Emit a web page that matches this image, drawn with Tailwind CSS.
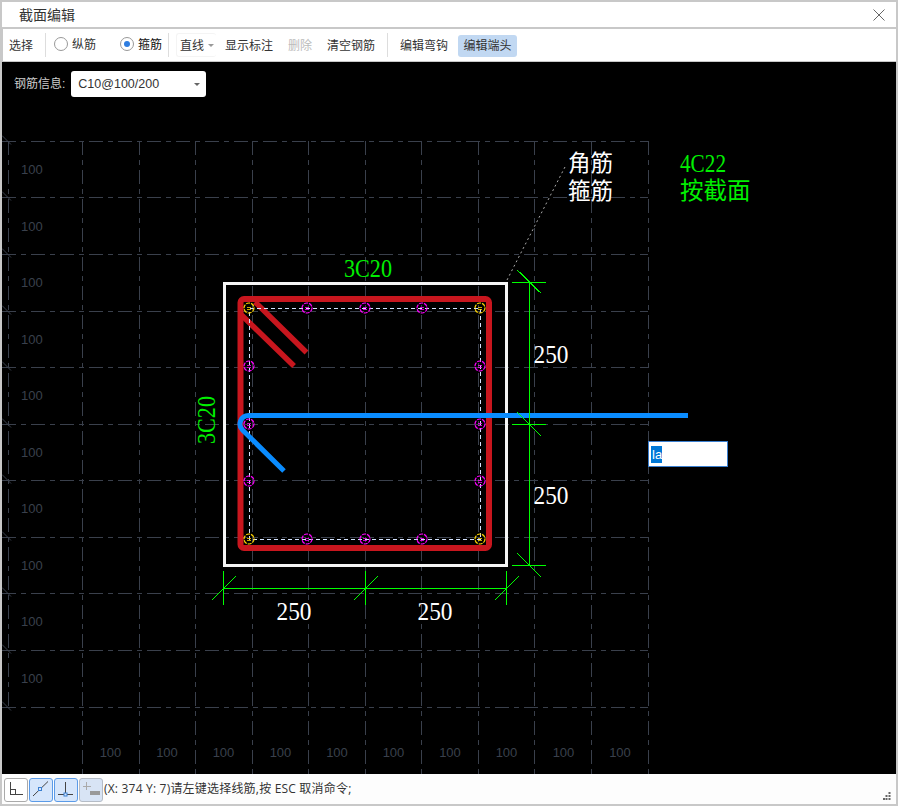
<!DOCTYPE html>
<html lang="en">
<head>
    <meta charset="UTF-8">
    <script src="https://cdn.jsdelivr.net/npm/@tailwindcss/browser@4"></script>
    <title>截面编辑</title>
</head>
<body class="bg-[#c8c8c8] overflow-hidden">
    <div class="w-[898px] h-[806px] flex flex-col pt-[2px] pb-[2px] px-[2px] text-[12px] text-[#333] font-['Liberation_Sans','Noto_Sans_CJK_SC',sans-serif]">
        <!-- title -->
        <div class="h-[25px] shrink-0 bg-white flex items-center justify-between pl-[17px] pr-[10px] pt-px">
            <span class="text-[14px]">截面编辑</span>
            <svg width="14" height="14" viewBox="0 0 14 14" fill="none" stroke="#666" stroke-width="1"><path d="M1.500 1.500 12.500 12.500M12.500 1.500 1.500 12.500"/></svg>
        </div>
        <!-- toolbar -->
        <div class="h-[32px] shrink-0 mt-[2px] ml-[1px] bg-white flex items-center">
            <span class="ml-[6px] w-[24px] mt-[2px]">选择</span>
            <div class="ml-[12px] w-px h-[24px] bg-[#ddd]"></div>
            <div class="ml-[8px] mb-[3px] w-[14px] h-[14px] rounded-full border border-[#999]"></div>
            <span class="ml-[4px] mb-px">纵筋</span>
            <div class="ml-[24px] mb-[3px] w-[14px] h-[14px] rounded-full border border-[#999] flex items-center justify-center">
                <div class="w-[6px] h-[6px] rounded-full bg-[#2e7de0]"></div>
            </div>
            <span class="ml-[4px] mb-px text-[#111]">箍筋</span>
            <div class="ml-[6px] w-px h-[24px] bg-[#ddd]"></div>
            <div class="ml-[7px] w-[40px] h-[24px] flex items-center pl-[3px] rounded-[3px] border border-[#f4f4f4] border-r-0">
                <span class="mt-[2px]">直线</span>
                <div class="ml-[4px] w-0 h-0 border-x-[3px] border-x-transparent border-t-[3px] border-t-[#999]"></div>
            </div>
            <span class="ml-[9px] mt-[2px]">显示标注</span>
            <span class="ml-[15px] mt-[2px] text-[#bbb]">删除</span>
            <span class="ml-[15px] mt-[2px]">清空钢筋</span>
            <div class="ml-[12px] w-px h-[24px] bg-[#ddd]"></div>
            <span class="ml-[12px] mt-[2px]">编辑弯钩</span>
            <div class="ml-[10px] mt-[2px] h-[22px] w-[59px] bg-[#c1d8f2] rounded-[3px] flex items-center justify-center">编辑端头</div>
        </div>
        <!-- canvas -->
        <div class="relative h-[712px] shrink-0 mt-[1px] bg-black overflow-hidden">
            <svg id="drawing" class="absolute inset-0" width="894" height="712" viewBox="2 62 894 712" fill="none">
                <g id="grid" stroke="#3a404c" stroke-dasharray="14 5 5 5" shape-rendering="crispEdges"></g>
                <g id="gridLabels" fill="#3a404c" font-size="13" font-family="Liberation Sans, sans-serif"></g>
                <!-- concrete outline -->
                <rect x="224" y="283" width="282.500" height="282" stroke="#f5f5f5" stroke-width="3" shape-rendering="crispEdges"/>
                <line x1="507" y1="280" x2="566" y2="165" stroke="#aaa" stroke-dasharray="2 3"/>
                <!-- stirrup -->
                <rect x="240.500" y="299" width="248.500" height="249" rx="3.500" stroke="#c8161e" stroke-width="6"/>
                <path d="M255 302 306.500 352.500M241.500 315 294 366" stroke="#c8161e" stroke-width="5.500"/>
                <rect x="249.500" y="308.500" width="231" height="231" stroke="#d6e4ff" stroke-dasharray="4 3" shape-rendering="crispEdges"/>
                <g id="bars" fill="none"></g>
                <!-- active line -->
                <path d="M688 415.500H248.500A8.500 8.500 0 0 0 242.500 430L284 471" stroke="#0a8cff" stroke-width="5"/>
                <!-- dimensions -->
                <g stroke="#00ff00" stroke-width="1.300" shape-rendering="crispEdges">
                    <path d="M512 282.500H546M512 424.500H546M512 565.500H546M529.500 282V566"/>
                    <path d="M223.500 588.500H506.500M223.500 571V605M365.500 571V605M506.500 571V605"/>
                    <path d="M517 270 541 293M517 412 541 436M517 553 541 577M212 600 236 576M354 600 378 576M495 600 519 576"/>
                </g>
                <g font-family="Liberation Serif, Noto Sans CJK SC, serif" font-size="26">
                    <g fill="#ffffff">
                        <text x="533.500" y="363" textLength="35" lengthAdjust="spacingAndGlyphs">250</text>
                        <text x="533.500" y="504" textLength="35" lengthAdjust="spacingAndGlyphs">250</text>
                        <text x="276.500" y="620" textLength="35" lengthAdjust="spacingAndGlyphs">250</text>
                        <text x="417.500" y="620" textLength="35" lengthAdjust="spacingAndGlyphs">250</text>
                        <text x="568" y="171" font-size="22.500">角筋</text>
                        <text x="568" y="199" font-size="22.500">箍筋</text>
                    </g>
                    <g fill="#00f000">
                        <text x="344" y="277" textLength="48" lengthAdjust="spacingAndGlyphs">3C20</text>
                        <text transform="translate(215 444) rotate(-90)" textLength="48" lengthAdjust="spacingAndGlyphs">3C20</text>
                        <text x="680" y="172" textLength="46" lengthAdjust="spacingAndGlyphs">4C22</text>
                        <text x="680" y="199" font-size="23.500">按截面</text>
                    </g>
                </g>
            </svg>
            <!-- rebar info -->
            <div class="absolute left-[12px] top-[9px] flex items-center gap-[6px]">
                <span class="text-[#ccc]">钢筋信息:</span>
                <div class="w-[135px] h-[26px] bg-white rounded-[3px] flex items-center justify-between pl-[7px] pr-[6px] text-[12.5px]">
                    <span>C10@100/200</span>
                    <div class="w-0 h-0 border-x-[3px] border-x-transparent border-t-[3px] border-t-[#666]"></div>
                </div>
            </div>
            <!-- length input -->
            <div class="absolute left-[646px] top-[379px] w-[80px] h-[26px] bg-white border border-[#3a7fd0] flex items-center pl-[2px] text-[13px]">
                <span class="bg-[#0078d7] text-white h-[17px] w-[11px] leading-[17px] px-px">la</span>
            </div>
        </div>
        <!-- status bar -->
        <div class="relative h-[30px] shrink-0 bg-[#fdfdfd] flex items-center pl-[2px] gap-px">
            <div class="mt-[2px] w-[24px] h-[24px] bg-white border border-[#aaa] rounded-[3px]">
                <svg width="22" height="22" viewBox="0 0 22 22" fill="none" stroke="#444"><path d="M5.500 3V15.500H17.500M5.500 10.500H10.500V15.500" shape-rendering="crispEdges"/></svg>
            </div>
            <div class="mt-[2px] w-[24px] h-[24px] bg-[#d6e6fb] border border-[#5b9be8] rounded-[3px]">
                <svg width="22" height="22" viewBox="0 0 22 22" fill="none" stroke="#444"><path d="M3 17 18 2.500"/><rect x="8.500" y="8.500" width="3" height="3" stroke="#3a7fd0" fill="#d6e6fb"/></svg>
            </div>
            <div class="mt-[2px] w-[24px] h-[24px] bg-[#d6e6fb] border border-[#5b9be8] rounded-[3px]">
                <svg width="22" height="22" viewBox="0 0 22 22" fill="none" stroke="#444"><path d="M3 15.500H18M10.500 3V15.500" shape-rendering="crispEdges"/><rect x="9" y="14" width="3" height="3" stroke="#3a7fd0" fill="#d6e6fb"/></svg>
            </div>
            <div class="mt-[2px] w-[24px] h-[24px] bg-[#d8e4f5] border border-[#b5bcc6] rounded-[3px]">
                <svg width="22" height="22" viewBox="0 0 22 22" fill="none"><path d="M6.500 3V11M2.500 7.500H10.500" stroke="#aaa" shape-rendering="crispEdges"/><rect x="10" y="12" width="10" height="4" fill="#999"/></svg>
            </div>
            <span class="tracking-[0.2px] font-['Open_Sans','Noto_Sans_CJK_SC',sans-serif]">(X: 374 Y: 7)请左键选择线筋,按 ESC 取消命令;</span>
            <svg class="absolute right-[5px] bottom-[4px]" width="8" height="8" viewBox="0 0 8 8" fill="#666"><path d="M5.500 0h2v2h-2zM5.500 3h2v2h-2zM5.500 6h2v2h-2zM2.500 3h2v2h-2zM2.500 6h2v2h-2zM0 6h2v2H0z"/></svg>
        </div>
    </div>
    <script>
        const NS = 'http://www.w3.org/2000/svg';
        function add(parent, tag, attrs, txt) {
            const el = document.createElementNS(NS, tag);
            for (const k in attrs) el.setAttribute(k, attrs[k]);
            if (txt) el.textContent = txt;
            document.getElementById(parent).appendChild(el);
        }
        // horizontal grid, plus the little ticks at the left edge
        const rows = [141, 197.5, 254, 311, 367, 424, 480, 537, 593, 650, 707];
        rows.forEach(y => {
            const yy = Math.floor(y) + 0.5;
            add('grid', 'line', { x1: 2, y1: yy, x2: 648, y2: yy });
            add('grid', 'path', { d: `M2 ${yy - 6}L11 ${yy + 3}`, 'stroke-dasharray': 'none', 'shape-rendering': 'auto' });
        });
        // vertical grid
        add('grid', 'line', { x1: 8.5, y1: 141, x2: 8.5, y2: 707 });
        [82, 139, 195, 252, 308, 365, 421, 478, 534, 591, 648].forEach(x => {
            add('grid', 'line', { x1: x + 0.5, y1: 141, x2: x + 0.5, y2: 774 });
        });
        // grid labels
        [174, 231, 287, 344, 400, 457, 513, 570, 626, 683].forEach(y => {
            add('gridLabels', 'text', { x: 21, y: y }, '100');
        });
        [110.5, 167, 223.5, 280.5, 337, 393.5, 450, 506.5, 563.5, 620].forEach(x => {
            add('gridLabels', 'text', { x: x, y: 757, 'text-anchor': 'middle' }, '100');
        });
        // rebar points: yellow on corners, magenta on the rest
        const xs = [249, 307, 365, 422, 480], ys = [308, 366, 424, 481, 539];
        ys.forEach((y, r) => xs.forEach((x, c) => {
            const onEdge = r === 0 || r === 4 || c === 0 || c === 4;
            if (!onEdge) return;
            const corner = (r === 0 || r === 4) && (c === 0 || c === 4);
            const col = corner ? '#ffd400' : '#ff00ff';
            add('bars', 'circle', { cx: x, cy: y, r: 5, stroke: col, 'stroke-width': 1.2, 'stroke-dasharray': '4 1' });
            add('bars', 'path', { d: `M${x - 2} ${y - 0.5}H${x + 2}M${x - 2} ${y + 1.5}H${x + 2}`, stroke: col, 'stroke-width': 0.8 });
        }));
    </script>
</body>
</html>
